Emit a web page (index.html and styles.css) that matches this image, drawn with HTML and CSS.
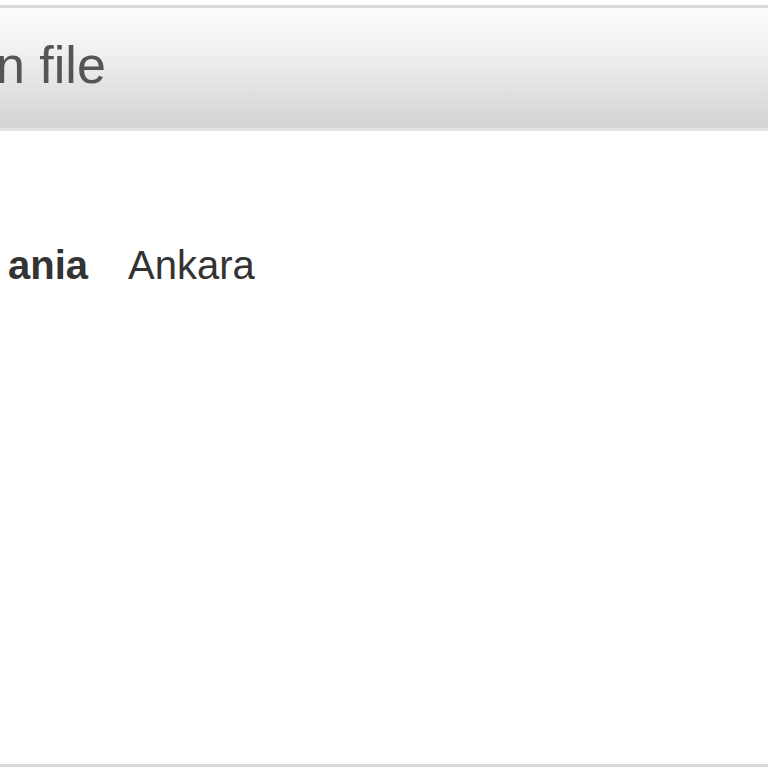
FILE: index.html
```html
<!DOCTYPE html>
<html>
<head>
<meta charset="utf-8">
<link rel="stylesheet" href="styles.css">
</head>
<body>
<div class="panel">
  <div class="panel-header"><span class="title">n file</span></div>
  <div class="panel-body">
    <div class="row">
      <span class="name">ania</span>
      <span class="city">Ankara</span>
    </div>
  </div>
</div>
</body>
</html>
```
FILE: styles.css
```css
html, body {
  margin: 0;
  padding: 0;
  background: #ffffff;
  overflow: hidden;
}
body {
  font-family: "Liberation Sans", Arial, sans-serif;
}
.panel {
  margin: 5px -10px 0;
  height: 762px;
  box-sizing: border-box;
  border: 3px solid #d9d9d9;
  overflow: hidden;
}
.panel-header {
  height: 123px;
  box-sizing: border-box;
  padding: 31px 0 0 10px;
  background: linear-gradient(to bottom, #fdfdfd 0%, #f1f1f1 35%, #dcdcdc 80%, #d4d4d4 100%);
  border-bottom: 3px solid #e2e2e2;
  overflow: hidden;
  white-space: nowrap;
}
.title {
  display: block;
  font-size: 52px;
  line-height: 52px;
  color: #555555;
  text-indent: -7px;
}
.panel-body {
  padding: 114px 0 0 10px;
}
.row {
  display: flex;
  align-items: baseline;
  gap: 40px;
  font-size: 40px;
  line-height: 40px;
  color: #333333;
  padding-left: 5px;
}
.name {
  font-weight: bold;
}
```
